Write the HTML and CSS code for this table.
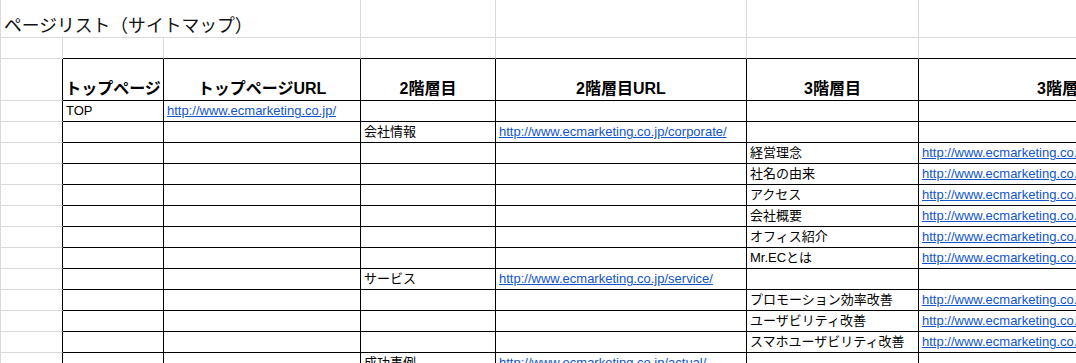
FILE: index.html
```html
<!DOCTYPE html>
<html lang="ja">
<head>
<meta charset="utf-8">
<title>ページリスト（サイトマップ）</title>
<link rel="stylesheet" href="styles.css">
</head>
<body>
<div class="sheet">
  <!-- row 1 -->
  <div class="c title">ページリスト（サイトマップ）</div>
  <div class="c"></div><div class="c"></div><div class="c"></div><div class="c"></div>
  <!-- row 2 -->
  <div class="c"></div>
  <div class="c edge"></div><div class="c edge"></div><div class="c edge"></div><div class="c edge"></div><div class="c edge"></div><div class="c edge"></div>
  <!-- row 3 header -->
  <div class="c a"></div>
  <div class="c t h">トップページ</div>
  <div class="c t h">トップページURL</div>
  <div class="c t h">2階層目</div>
  <div class="c t h">2階層目URL</div>
  <div class="c t h">3階層目</div>
  <div class="c t h">3階層目URL</div>
  <!-- row 4 -->
  <div class="c a"></div>
  <div class="c t">TOP</div>
  <div class="c t"><a href="#">http://www.ecmarketing.co.jp/</a></div>
  <div class="c t"></div><div class="c t"></div><div class="c t"></div><div class="c t"></div>
  <!-- row 5 -->
  <div class="c a"></div>
  <div class="c t"></div><div class="c t"></div>
  <div class="c t">会社情報</div>
  <div class="c t"><a href="#">http://www.ecmarketing.co.jp/corporate/</a></div>
  <div class="c t"></div><div class="c t"></div>
  <!-- row 6 -->
  <div class="c a"></div>
  <div class="c t"></div><div class="c t"></div><div class="c t"></div><div class="c t"></div>
  <div class="c t">経営理念</div>
  <div class="c t"><a href="#">http://www.ecmarketing.co.jp/corporate/philosophy/</a></div>
  <!-- row 7 -->
  <div class="c a"></div>
  <div class="c t"></div><div class="c t"></div><div class="c t"></div><div class="c t"></div>
  <div class="c t">社名の由来</div>
  <div class="c t"><a href="#">http://www.ecmarketing.co.jp/corporate/origin/</a></div>
  <!-- row 8 -->
  <div class="c a"></div>
  <div class="c t"></div><div class="c t"></div><div class="c t"></div><div class="c t"></div>
  <div class="c t">アクセス</div>
  <div class="c t"><a href="#">http://www.ecmarketing.co.jp/corporate/access/</a></div>
  <!-- row 9 -->
  <div class="c a"></div>
  <div class="c t"></div><div class="c t"></div><div class="c t"></div><div class="c t"></div>
  <div class="c t">会社概要</div>
  <div class="c t"><a href="#">http://www.ecmarketing.co.jp/corporate/outline/</a></div>
  <!-- row 10 -->
  <div class="c a"></div>
  <div class="c t"></div><div class="c t"></div><div class="c t"></div><div class="c t"></div>
  <div class="c t">オフィス紹介</div>
  <div class="c t"><a href="#">http://www.ecmarketing.co.jp/corporate/office/</a></div>
  <!-- row 11 -->
  <div class="c a"></div>
  <div class="c t"></div><div class="c t"></div><div class="c t"></div><div class="c t"></div>
  <div class="c t">Mr.ECとは</div>
  <div class="c t"><a href="#">http://www.ecmarketing.co.jp/corporate/mrec/</a></div>
  <!-- row 12 -->
  <div class="c a"></div>
  <div class="c t"></div><div class="c t"></div>
  <div class="c t">サービス</div>
  <div class="c t"><a href="#">http://www.ecmarketing.co.jp/service/</a></div>
  <div class="c t"></div><div class="c t"></div>
  <!-- row 13 -->
  <div class="c a"></div>
  <div class="c t"></div><div class="c t"></div><div class="c t"></div><div class="c t"></div>
  <div class="c t">プロモーション効率改善</div>
  <div class="c t"><a href="#">http://www.ecmarketing.co.jp/service/promotion/</a></div>
  <!-- row 14 -->
  <div class="c a"></div>
  <div class="c t"></div><div class="c t"></div><div class="c t"></div><div class="c t"></div>
  <div class="c t">ユーザビリティ改善</div>
  <div class="c t"><a href="#">http://www.ecmarketing.co.jp/service/usability/</a></div>
  <!-- row 15 -->
  <div class="c a"></div>
  <div class="c t"></div><div class="c t"></div><div class="c t"></div><div class="c t"></div>
  <div class="c t">スマホユーザビリティ改善</div>
  <div class="c t"><a href="#">http://www.ecmarketing.co.jp/service/smartphone/</a></div>
  <!-- row 16 -->
  <div class="c a"></div>
  <div class="c t"></div><div class="c t"></div>
  <div class="c t">成功事例</div>
  <div class="c t"><a href="#">http://www.ecmarketing.co.jp/actual/</a></div>
  <div class="c t"></div><div class="c t"></div>
</div>
</body>
</html>
```

FILE: styles.css
```css
html, body {
  margin: 0;
  padding: 0;
  background: #fff;
  overflow: hidden;
}

.sheet {
  display: grid;
  grid-template-columns: 62px 101px 197px 135px 251px 172px 327px;
  grid-template-rows: 38px 21px 42px repeat(13, 21px);
  width: max-content;
  border-left: 1px solid #dadada;
  font-family: "Liberation Sans", "Noto Sans CJK JP", sans-serif;
  font-size: 13px;
  line-height: 16px;
  color: #000;
}

.c {
  box-sizing: border-box;
  border-right: 1px solid #dadada;
  border-bottom: 1px solid #dadada;
  padding: 0 3px 2px 3px;
  display: flex;
  align-items: flex-end;
  white-space: nowrap;
  overflow: hidden;
  min-width: 0;
}

.title {
  grid-column: span 3;
  font-family: "Noto Sans CJK JP", sans-serif;
  font-size: 17.8px;
  line-height: 22px;
  padding: 0 0 2px 3px;
  color: #111;
  overflow: visible;
}

.edge {
  border-bottom-color: #000;
}

.a {
  border-right-color: #000;
}

.t {
  border-right-color: #000;
  border-bottom-color: #000;
}

.h {
  justify-content: center;
  font-weight: bold;
  font-size: 16px;
  line-height: 20px;
  padding-bottom: 1px;
}

.t a {
  color: #1155cc;
  text-decoration: underline;
}
```
